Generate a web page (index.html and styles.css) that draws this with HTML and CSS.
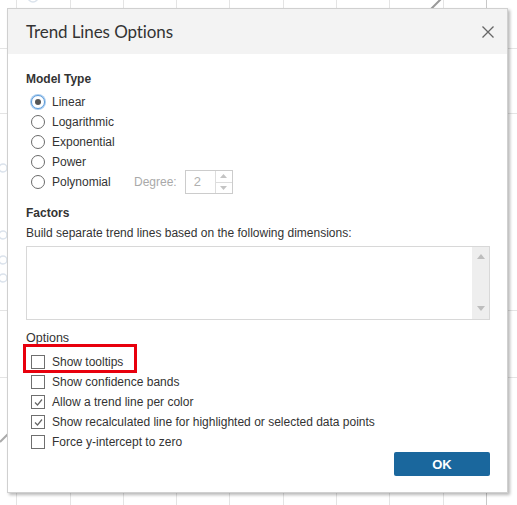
FILE: index.html
```html
<!DOCTYPE html>
<html>
<head>
<meta charset="utf-8">
<link rel="stylesheet" href="styles.css">
</head>
<body>
<div class="canvas">
  <svg class="chart" width="517" height="505" viewBox="0 0 517 505">
    <g stroke="#e4e4e4" stroke-width="1">
      <line x1="16.5" y1="0" x2="16.5" y2="505"/>
      <line x1="70.5" y1="0" x2="70.5" y2="505"/>
      <line x1="123.5" y1="0" x2="123.5" y2="505"/>
      <line x1="176.5" y1="0" x2="176.5" y2="505"/>
      <line x1="229.5" y1="0" x2="229.5" y2="505"/>
      <line x1="283.5" y1="0" x2="283.5" y2="505"/>
      <line x1="336.5" y1="0" x2="336.5" y2="505"/>
      <line x1="389.5" y1="0" x2="389.5" y2="505"/>
      <line x1="443.5" y1="0" x2="443.5" y2="505"/>
      <line x1="0" y1="48.5" x2="517" y2="48.5"/>
      <line x1="0" y1="113.5" x2="517" y2="113.5"/>
      <line x1="0" y1="310.5" x2="517" y2="310.5"/>
      <line x1="0" y1="377.5" x2="517" y2="377.5"/>
    </g>
    <line x1="486.5" y1="0" x2="486.5" y2="505" stroke="#c8c8c8"/>
    <g fill="none" stroke="#dbe3ec" stroke-width="1.5">
      <circle cx="33" cy="-3" r="5"/>
      <circle cx="3" cy="168" r="4"/>
      <circle cx="3" cy="235" r="4"/>
      <circle cx="3" cy="260" r="4"/>
      <circle cx="3" cy="278" r="4"/>
    </g>
    <line x1="430" y1="10" x2="442" y2="-2" stroke="#999" stroke-width="2"/>
    <line x1="0" y1="442" x2="8" y2="434" stroke="#aaa" stroke-width="2"/>
  </svg>

  <div class="dialog">
    <div class="dialog-header">
      <span class="dialog-title">Trend Lines Options</span>
      <svg class="close" width="12" height="12" viewBox="0 0 12 12">
        <path d="M0.5 0.5 L11.5 11.5 M11.5 0.5 L0.5 11.5" stroke="#666" stroke-width="1.3" fill="none"/>
      </svg>
    </div>
    <div class="dialog-body">
      <div class="section-title strong">Model Type</div>
      <div class="option-list">
        <label class="option"><span class="radio checked"></span><span>Linear</span></label>
        <label class="option"><span class="radio"></span><span>Logarithmic</span></label>
        <label class="option"><span class="radio"></span><span>Exponential</span></label>
        <label class="option"><span class="radio"></span><span>Power</span></label>
        <div class="option">
          <span class="radio"></span><span class="poly-label">Polynomial</span>
          <span class="degree-label">Degree:</span>
          <span class="spinner">
            <span class="spinner-value">2</span>
            <span class="spinner-buttons">
              <span class="spin-btn"><svg width="7" height="4" viewBox="0 0 7 4"><path d="M0 4 L3.5 0 L7 4 Z" fill="#c4c4c4"/></svg></span>
              <span class="spin-btn"><svg width="7" height="4" viewBox="0 0 7 4"><path d="M0 0 L3.5 4 L7 0 Z" fill="#c4c4c4"/></svg></span>
            </span>
          </span>
        </div>
      </div>

      <div class="section-title strong factors">Factors</div>
      <div class="hint">Build separate trend lines based on the following dimensions:</div>
      <div class="listbox">
        <div class="list-area"></div>
        <div class="scrollbar">
          <svg width="8" height="5" viewBox="0 0 8 5"><path d="M0 5 L4 0 L8 5 Z" fill="#bdbdbd"/></svg>
          <svg width="8" height="5" viewBox="0 0 8 5"><path d="M0 0 L4 5 L8 0 Z" fill="#bdbdbd"/></svg>
        </div>
      </div>

      <div class="section-title options-title">Options</div>
      <div class="option-list checks">
        <label class="option highlighted"><span class="checkbox"></span><span>Show tooltips</span><span class="annotation"></span></label>
        <label class="option"><span class="checkbox"></span><span>Show confidence bands</span></label>
        <label class="option"><span class="checkbox checked"><svg width="11" height="11" viewBox="0 0 11 11"><path d="M2 5.5 L4.5 8 L9 2.5" stroke="#666" stroke-width="1.2" fill="none"/></svg></span><span>Allow a trend line per color</span></label>
        <label class="option"><span class="checkbox checked"><svg width="11" height="11" viewBox="0 0 11 11"><path d="M2 5.5 L4.5 8 L9 2.5" stroke="#666" stroke-width="1.2" fill="none"/></svg></span><span>Show recalculated line for highlighted or selected data points</span></label>
        <label class="option"><span class="checkbox"></span><span>Force y-intercept to zero</span></label>
      </div>

      <div class="footer">
        <button class="ok-btn">OK</button>
      </div>
    </div>
  </div>
</div>
</body>
</html>
```

FILE: styles.css
```css
* { box-sizing: border-box; }

html, body {
  margin: 0;
  padding: 0;
  background: #ffffff;
}

body {
  font-family: "Liberation Sans", Arial, sans-serif;
  font-size: 12px;
  color: #333333;
}

.canvas {
  position: relative;
  width: 517px;
  height: 505px;
  overflow: hidden;
  padding: 8px 0 0 7px;
}

.chart {
  position: absolute;
  left: 0;
  top: 0;
}

.dialog {
  position: relative;
  width: 501px;
  height: 485px;
  background: #ffffff;
  border: 1px solid #d0d0d0;
  box-shadow: 2px 2px 3px rgba(0, 0, 0, 0.28);
  display: flex;
  flex-direction: column;
}

.dialog-header {
  height: 45px;
  flex: none;
  background: #f3f3f3;
  display: flex;
  align-items: center;
  justify-content: space-between;
  padding: 0 13px 0 18px;
}

.dialog-title {
  font-family: Lato, "Open Sans", sans-serif;
  font-size: 17px;
  color: #333333;
  letter-spacing: -0.1px;
}

.close {
  display: block;
  margin-top: 1px;
}

.dialog-body {
  flex: 1;
  display: flex;
  flex-direction: column;
  padding: 17px 17px 0 18px;
}

.section-title {
  line-height: 16px;
  height: 16px;
  font-size: 12px;
  color: #333333;
}

.strong {
  font-weight: bold;
}

.option-list {
  display: flex;
  flex-direction: column;
  margin-top: 5px;
  padding-left: 5px;
}

.option {
  position: relative;
  height: 20px;
  display: flex;
  align-items: center;
  gap: 7px;
  line-height: 14px;
}

.radio {
  width: 14px;
  height: 14px;
  border-radius: 50%;
  border: 1px solid #6b6b6b;
  background: #ffffff;
  flex: none;
  display: flex;
  align-items: center;
  justify-content: center;
}

.radio.checked {
  border-color: #5c9ad8;
  box-shadow: 0 0 0 1px #a9cdf0;
}

.radio.checked::after {
  content: "";
  width: 6px;
  height: 6px;
  border-radius: 50%;
  background: #555555;
}

.poly-label {
  width: 75px;
}

.degree-label {
  color: #a9a9a9;
  margin-right: 1px;
}

.spinner {
  width: 48px;
  height: 24px;
  margin: -2px 0;
  border: 1px solid #cccccc;
  display: flex;
}

.spinner-value {
  flex: 1;
  color: #b0b0b0;
  font-size: 13px;
  padding-left: 8px;
  display: flex;
  align-items: center;
}

.spinner-buttons {
  width: 17px;
  border-left: 1px solid #dddddd;
  display: flex;
  flex-direction: column;
}

.spin-btn {
  flex: 1;
  display: flex;
  align-items: center;
  justify-content: center;
}

.spin-btn + .spin-btn {
  border-top: 1px solid #dddddd;
}

.factors {
  margin-top: 13px;
}

.hint {
  margin-top: 4px;
  line-height: 16px;
}

.listbox {
  margin-top: 5px;
  height: 74px;
  border: 1px solid #d8d8d8;
  display: flex;
}

.list-area {
  flex: 1;
}

.scrollbar {
  width: 17px;
  background: #eeeeee;
  display: flex;
  flex-direction: column;
  justify-content: space-between;
  align-items: center;
  padding: 7px 0 8px;
}

.scrollbar svg {
  display: block;
}

.options-title {
  margin-top: 10px;
  font-size: 12.5px;
}

.checks {
  margin-top: 6px;
}

.checkbox {
  width: 14px;
  height: 14px;
  border: 1px solid #6f6f6f;
  background: #ffffff;
  flex: none;
  display: flex;
  align-items: center;
  justify-content: center;
}

.checkbox svg {
  display: block;
}

.annotation {
  position: absolute;
  left: -8px;
  top: -8px;
  width: 114px;
  height: 29px;
  border: 3px solid #e8000d;
}

.footer {
  display: flex;
  justify-content: flex-end;
}

.ok-btn {
  width: 96px;
  height: 24px;
  border: none;
  border-radius: 2px;
  background: #1a679d;
  color: #ffffff;
  font-family: "Liberation Sans", Arial, sans-serif;
  font-weight: bold;
  font-size: 13px;
  padding: 0;
}
```
